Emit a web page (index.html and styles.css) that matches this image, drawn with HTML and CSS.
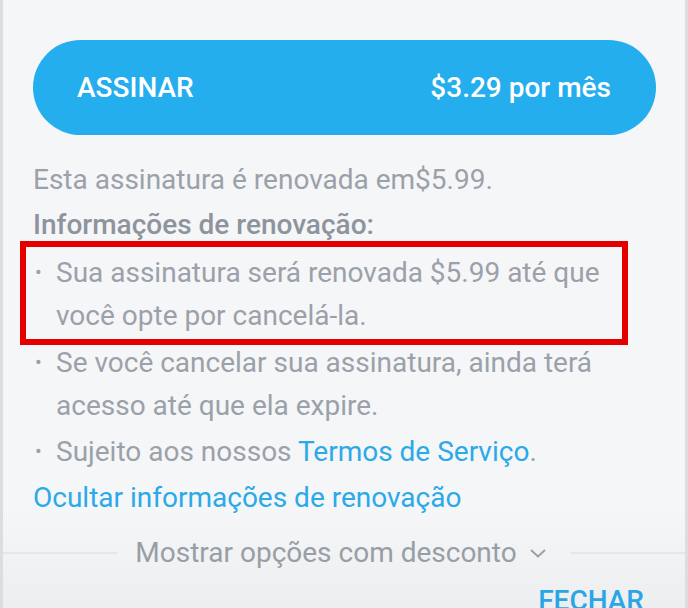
FILE: index.html
```html
<!DOCTYPE html>
<html lang="pt-BR">
<head>
    <meta charset="UTF-8">
    <meta name="viewport" content="width=device-width, initial-scale=1.0">
    <title>Assinatura</title>
    <link rel="stylesheet" href="styles.css">
</head>
<body>
    <div class="sheet">
        <button class="subscribe">
            <span>ASSINAR</span>
            <span>$3.29 por mês</span>
        </button>

        <p class="note">Esta assinatura é renovada em$5.99.</p>
        <h3 class="infoTitle">Informações de renovação:</h3>

        <ul class="infoList">
            <li class="highlight">Sua assinatura será renovada $5.99 até que você opte por cancelá-la.</li>
            <li>Se você cancelar sua assinatura, ainda terá acesso até que ela expire.</li>
            <li><span>Sujeito aos nossos <a href="#">Termos de Serviço</a>.</span></li>
        </ul>

        <a class="toggle" href="#">Ocultar informações de renovação</a>

        <div class="discount">
            <span class="line"></span>
            <span class="discountLabel">Mostrar opções com desconto</span>
            <svg class="chevron" width="18" height="12" viewBox="0 0 18 12">
                <polyline points="2,3 9,9.5 16,3" fill="none" stroke="#9aa0a8" stroke-width="2"/>
            </svg>
            <span class="line right"></span>
        </div>

        <div class="actions">
            <a class="close" href="#">FECHAR</a>
        </div>
    </div>
</body>
</html>
```

FILE: styles.css
```css
html, body {
    margin: 0;
    height: 100%;
}

body {
    font-family: Roboto, "Liberation Sans", sans-serif;
    overflow: hidden;
}

.sheet {
    box-sizing: border-box;
    height: 100%;
    padding: 40px 29px 0 30px; /* 내용 영역 x 33 ~ 656 */
    background: linear-gradient(#f5f6f8 0, #f5f6f8 84%, #eceef0 100%);
    border-left: 3px solid #dcdde1;
    border-right: 3px solid #dcdde1;
}

.subscribe {
    display: flex;
    justify-content: space-between;
    align-items: center;
    width: 100%;
    height: 95px;
    margin: 0;
    padding: 0 45px 0 44px;
    box-sizing: border-box;
    border: none;
    border-radius: 48px;
    background-color: #25aeee;
    color: #fff;
    font-family: inherit;
    font-size: 28px;
    font-weight: 500;
    cursor: pointer;
}

.note,
.infoTitle {
    margin: 0;
    font-size: 28px;
    line-height: 43px;
}

.note {
    margin-top: 23px;
    color: #9ba1a9;
    font-weight: 400;
}

.infoTitle {
    margin-top: 2px;
    color: #8e949c;
    font-weight: 500;
}

.infoList {
    list-style: none;
    margin: 5px 0 0;
    padding: 0;
}

.infoList li {
    display: flex;
    margin-top: 3px;
    font-size: 28px;
    line-height: 43px;
    color: #9ba1a9;
}

.infoList li:first-child {
    margin-top: 0;
}

.infoList li::before {
    content: "•";
    flex: none;
    width: 21px;
    padding-left: 2px;
    font-size: 20px;
}

.infoList li.highlight {
    margin: -10px 28px -8px -13px;
    padding: 4px 0 2px 7px;
    border: 6px solid #e50000;
}

.infoList li.highlight + li {
    margin-top: 4px;
}

.infoList a,
.toggle {
    color: #2ba9e8;
    text-decoration: none;
}

.toggle {
    display: block;
    margin-top: 3px;
    font-size: 28px;
    line-height: 43px;
}

.discount {
    display: flex;
    align-items: center;
    margin: 12px -29px 0 -30px;
    height: 43px;
}

.discount .line {
    flex: 1;
    height: 2px;
    background-color: #e4e6e9;
    margin-right: 18px;
}

.discount .line.right {
    margin: 0 0 0 24px;
}

.discountLabel {
    font-size: 28px;
    color: #989ea6;
}

.chevron {
    margin-left: 12px;
}

.actions {
    display: flex;
    justify-content: flex-end;
    margin-top: 5px;
    padding-right: 12px;
}

.close {
    font-size: 28px;
    font-weight: 500;
    line-height: 43px;
    color: #2aa6e4;
    text-decoration: none;
}
```
